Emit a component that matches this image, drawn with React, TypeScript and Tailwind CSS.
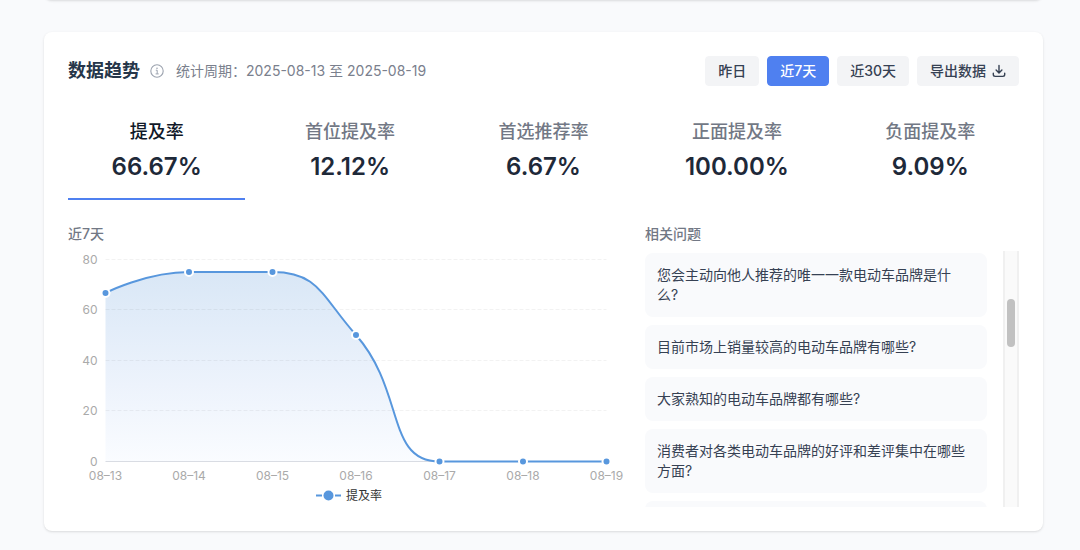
const ranges = ['昨日', '近7天', '近30天']

const metrics = [
  { label: '提及率', value: '66.67%' },
  { label: '首位提及率', value: '12.12%' },
  { label: '首选推荐率', value: '6.67%' },
  { label: '正面提及率', value: '100.00%' },
  { label: '负面提及率', value: '9.09%' },
]

const questions = [
  '您会主动向他人推荐的唯一一款电动车品牌是什么?',
  '目前市场上销量较高的电动车品牌有哪些?',
  '大家熟知的电动车品牌都有哪些?',
  '消费者对各类电动车品牌的好评和差评集中在哪些方面?',
]

const points = [
  { date: '08–13', x: 37.5, y: 42 },
  { date: '08–14', x: 121, y: 21 },
  { date: '08–15', x: 204.5, y: 21 },
  { date: '08–16', x: 288, y: 84 },
  { date: '08–17', x: 371.5, y: 210.5 },
  { date: '08–18', x: 455, y: 210.5 },
  { date: '08–19', x: 538.5, y: 210.5 },
]

const ticks = [
  { value: 80, y: 8.5 },
  { value: 60, y: 58.5 },
  { value: 40, y: 109.5 },
  { value: 20, y: 159.5 },
  { value: 0, y: 210.5 },
]

const curve =
  'M37.5 42C37.5 42 78.6 21 121 21C162.1 21 167.5 21 204.5 21C250.9 21 253.8 45.6 288 84C337.4 140.2 317.8 210.5 371.5 210.5H538.5'

export default function App() {
  return (
    <main className="flow-root min-h-screen bg-[#f9fafc] pr-[37px] pl-11 font-['Inter','Noto_Sans_CJK_SC',sans-serif]">
      {/* Bottom edge of the previous card */}
      <div className="-mt-2 h-2 rounded-b-lg bg-white shadow-sm" />

      <section className="mt-8 rounded-lg bg-white p-6 shadow-sm">
        <header className="flex items-center justify-between">
          <div className="flex items-center">
            <h2 className="text-lg font-semibold text-[#26364a]">数据趋势</h2>
            <InfoIcon />
            <p className="ml-3 text-sm text-[#7a808d]">统计周期：2025-08-13 至 2025-08-19</p>
          </div>
          <div className="flex gap-2">
            {ranges.map((range) => (
              <RangeButton key={range} label={range} active={range === '近7天'} />
            ))}
            <button className="flex h-[30px] items-center gap-[6px] rounded border border-gray-100 bg-gray-100 px-3 text-sm font-medium text-gray-700">
              导出数据
              <DownloadIcon />
            </button>
          </div>
        </header>

        <div className="mt-8 grid grid-cols-5 gap-4">
          {metrics.map((metric, i) => (
            <Metric key={metric.label} label={metric.label} value={metric.value} active={i === 0} />
          ))}
        </div>

        <div className="mt-6 grid grid-cols-[3fr_2fr] gap-4">
          <div>
            <h3 className="text-sm font-medium text-[#727885]">近7天</h3>
            <TrendChart />
          </div>
          <div>
            <h3 className="text-sm font-medium text-[#727885]">相关问题</h3>
            <div className="mt-[7px] flex h-64 gap-4 overflow-hidden">
              <ul className="flex-1 space-y-2 pt-[2px]">
                {questions.map((question) => (
                  <li key={question} className="rounded-lg bg-[#f9fafc] py-3 pr-4 pl-3 text-sm text-gray-700">
                    {question}
                  </li>
                ))}
                <li aria-hidden="true" className="h-11 rounded-lg bg-[#f9fafc]" />
              </ul>
              {/* Scrollbar */}
              <div className="w-4 border-x-2 border-[#f0f0f0] bg-[#fafafa] px-[2px] pt-12">
                <div className="h-12 rounded-full bg-[#c1c1c1]" />
              </div>
            </div>
          </div>
        </div>
      </section>
    </main>
  )
}

function RangeButton({ label, active }: { label: string; active: boolean }) {
  return (
    <button
      className={`h-[30px] rounded border px-3 text-sm font-medium ${
        active ? 'border-[#4f80f0] bg-[#4f80f0] text-white' : 'border-gray-100 bg-gray-100 text-gray-700'
      }`}
    >
      {label}
    </button>
  )
}

function Metric({ label, value, active }: { label: string; value: string; active: boolean }) {
  return (
    <button className={`border-b-2 pb-[15px] text-center ${active ? 'border-[#4f80f0]' : 'border-transparent'}`}>
      <div className={`text-lg font-medium ${active ? 'text-gray-900' : 'text-[#727885]'}`}>{label}</div>
      <div className="mt-[5px] text-2xl font-semibold text-gray-800">{value}</div>
    </button>
  )
}

function InfoIcon() {
  return (
    <svg viewBox="0 0 14 14" className="ml-[10px] size-[14px]" fill="none" stroke="#9ca3af">
      <circle cx="7" cy="7" r="6.2" strokeWidth="1.1" />
      <path d="M5.8 6.2H7.2V9.8M5.6 9.9H8.7" strokeWidth="1" />
      <circle cx="7" cy="4.2" r="0.8" fill="#9ca3af" stroke="none" />
    </svg>
  )
}

function DownloadIcon() {
  return (
    <svg
      viewBox="0 0 14 14"
      className="size-[14px]"
      fill="none"
      stroke="currentColor"
      strokeWidth="1.4"
      strokeLinecap="round"
      strokeLinejoin="round"
    >
      <path d="M7 1.4V8.8M4.1 6.1L7 9L9.9 6.1" />
      <path d="M1.3 9.2V10.6Q1.3 12.4 3.1 12.4H10.9Q12.7 12.4 12.7 10.6V9.2" />
    </svg>
  )
}

function TrendChart() {
  return (
    <svg viewBox="0 0 560 256" preserveAspectRatio="xMinYMin" className="mt-[7px] h-64 w-full overflow-visible">
      <defs>
        <linearGradient id="area" x1="0" y1="0" x2="0" y2="1">
          <stop offset="0" stopColor="#d9e7f6" />
          <stop offset="0.6" stopColor="#edf3fc" />
          <stop offset="1" stopColor="#fafcff" />
        </linearGradient>
      </defs>
      <path d={`${curve}H37.5Z`} fill="url(#area)" />
      {ticks.map((tick) => (
        <g key={tick.value}>
          <path
            d={`M37.5 ${tick.y}H538.5`}
            stroke={tick.value ? '#000' : '#d9dce3'}
            strokeOpacity={tick.value ? 0.05 : 1}
            strokeDasharray={tick.value ? '4 2' : undefined}
          />
          <text x="29.5" y={tick.y + 4} textAnchor="end" className="fill-[#aaa] text-xs">
            {tick.value}
          </text>
        </g>
      ))}
      <path d={curve} fill="none" stroke="#5897dd" strokeWidth="2" />
      {points.map((point) => (
        <g key={point.date}>
          <circle cx={point.x} cy={point.y} r="4" fill="#5897dd" stroke="#fff" strokeWidth="2" />
          <text x={point.x} y="229" textAnchor="middle" className="fill-[#aaa] text-xs">
            {point.date}
          </text>
        </g>
      ))}
      <path d="M248 244.5H254M267 244.5H273" stroke="#5897dd" strokeWidth="2" />
      <circle cx="260.5" cy="244.5" r="5" fill="#5897dd" />
      <text x="278" y="249" className="fill-[#333] text-xs">
        提及率
      </text>
    </svg>
  )
}
